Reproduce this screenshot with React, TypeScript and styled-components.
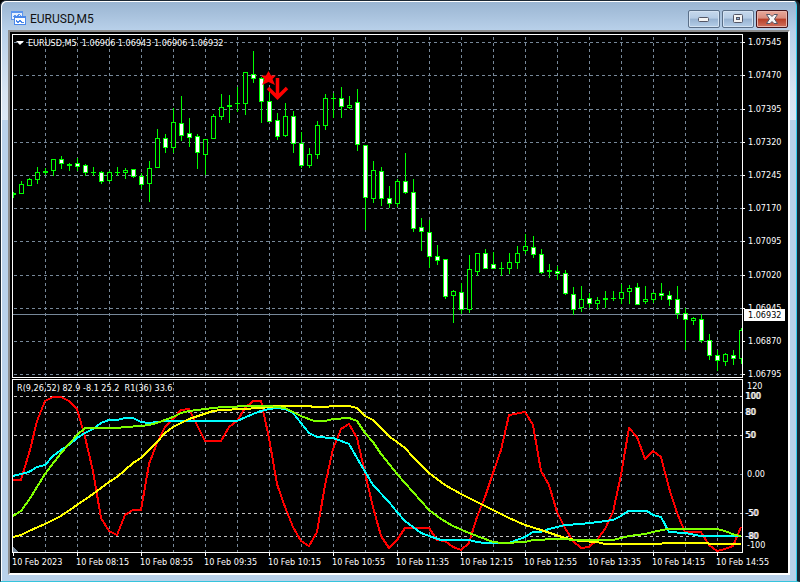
import React from "react";
import styled, { createGlobalStyle, css } from "styled-components";

const GRID = "#778899";
const LEVEL = "#c0c0c0";
const UP = "#00ff00";

const GlobalStyle = createGlobalStyle`
  *, *::before, *::after { box-sizing: border-box; }
  html, body, #root { height: 100%; }
  body { margin: 0; background: #000; font-family: "DejaVu Sans Condensed", "Noto Sans", sans-serif; }
`;

const Window = styled.main`
  display: flex;
  flex-direction: column;
  height: 100vh;
  padding: 0 7px 6px;
  border: 1px solid #1b2733;
  border-width: 1px 3px 1px 1px;
  border-bottom-color: #35c4dc;
  border-radius: 6px 6px 0 0;
  box-shadow: inset 1px 1px #fff, inset -1px 0 #35d0f0;
  background:
    linear-gradient(#99b4d1, #b9d1ea 30px, #d7e4f2 90px, #dce8f5 119px, transparent 119px),
    #b9d1ea;
`;

const TitleBar = styled.header`
  display: flex;
  align-items: center;
  flex: 0 0 29px;
  gap: 4px;
  padding: 6px 2px 0 3px;
`;

const Title = styled.h1`
  flex: 1;
  margin: 0;
  font-family: Roboto, "Noto Sans", sans-serif;
  font-size: 12px;
  font-weight: 400;
  line-height: 16px;
  color: #111;
`;

const Controls = styled.div`
  display: flex;
  gap: 2px;
`;

const ControlButton = styled.button<{ $danger?: boolean }>`
  display: flex;
  align-items: center;
  justify-content: center;
  width: 32px;
  height: 18px;
  padding: 0;
  border: 1px solid ${(p) => (p.$danger ? "#43141b" : "#5a6f88")};
  border-radius: 2px;
  background: ${(p) =>
    p.$danger
      ? "linear-gradient(#e8a99b, #d98b7c 45%, #b83f28 50%, #cf705d)"
      : "linear-gradient(#c6d8ec, #b5cce5 45%, #97b2d1 50%, #b5cee8)"};
  box-shadow: inset 0 0 0 1px ${(p) => (p.$danger ? "#e9b5ab" : "#d3e2f2")};
`;

const Chart = styled.section`
  display: grid;
  flex: 1;
  min-height: 0;
  grid-template-columns: minmax(0, 1fr) 45px;
  grid-template-rows: minmax(0, 344fr) minmax(0, 174fr) 19px;
  row-gap: 1px;
  padding: 2px 0 0 2px;
  border: 2px solid;
  border-color: #8c8c8c #fff #fff #8c8c8c;
  background: #000;
  color: #fff;
  font-size: 9px;
`;

const Panel = styled.div`
  position: relative;
  border: 1px solid #fff;
`;

const Plot = styled.svg`
  display: block;
  width: 100%;
  height: 100%;
`;

const Caption = styled.div<{ $inset: number }>`
  position: absolute;
  top: 1px;
  left: ${(p) => p.$inset}px;
  display: flex;
  align-items: center;
  gap: 4px;
  line-height: 14px;
  white-space: pre;
`;

const Scale = styled.div`
  position: relative;
  display: flex;
  flex-direction: column;
`;

const Step = styled.div<{ $span: number }>`
  display: flex;
  align-items: flex-end;
  flex: ${(p) => p.$span} 0 0;
  min-height: 0;
`;

const ScaleLabel = styled.span<{ $tick?: boolean; $strong?: boolean }>`
  display: flex;
  align-items: center;
  height: 1px;
  padding-left: ${(p) => (p.$tick ? 0 : p.$strong ? 2 : 4)}px;
  line-height: 1px;
  ${(p) => p.$strong && css`text-shadow: 1px 0 #fff;`}
  ${(p) =>
    p.$tick &&
    css`
      gap: 3px;
      &::before {
        content: "";
        width: 2px;
        height: 1px;
        background: #fff;
      }
    `}
`;

const PriceTag = styled.output`
  position: absolute;
  top: 80%;
  left: 1px;
  width: 41px;
  padding-left: 4px;
  background: #fff;
  color: #000;
  line-height: 12px;
`;

const TimeAxis = styled.div`
  display: flex;
  grid-column: 1 / -1;
  margin-top: -1px;
  padding-right: 45px;
`;

const TimeLabel = styled.time<{ $span: number }>`
  flex: ${(p) => p.$span} 0 0;
  min-width: 0;
  white-space: nowrap;
  line-height: 12px;
  &::before {
    content: "";
    display: block;
    width: 1px;
    height: 3px;
    margin-left: 1px;
    background: #fff;
  }
`;

type Candle = [high: number, top: number, bottom: number, low: number, bearish?: 1];

// A trailing 1 marks a bearish (filled) body
const candles: Candle[] = [
  [192, 193, 194, 197], [181, 184, 193, 193], [178, 179, 185, 185], [167, 172, 179, 183],
  [168, 171, 172, 174], [159, 159, 170, 175], [156, 159, 163, 168, 1], [163, 164, 165, 170],
  [158, 163, 166, 170, 1], [164, 165, 172, 175, 1], [167, 172, 172, 175], [171, 172, 181, 183, 1],
  [171, 172, 180, 181], [167, 172, 172, 175], [168, 170, 172, 178], [169, 169, 176, 177, 1],
  [173, 176, 184, 188, 1], [161, 168, 183, 201], [129, 138, 167, 167], [134, 138, 147, 152, 1],
  [108, 122, 147, 152], [96, 123, 135, 140, 1], [118, 133, 137, 146, 1], [134, 136, 152, 168, 1],
  [139, 139, 154, 174], [114, 116, 138, 138], [94, 107, 116, 119], [95, 105, 106, 122],
  [87, 103, 103, 111], [72, 72, 103, 114], [51, 74, 78, 82, 1], [77, 78, 101, 122, 1],
  [90, 101, 121, 121, 1], [113, 120, 136, 139, 1], [103, 116, 135, 136], [111, 116, 143, 152, 1],
  [132, 143, 165, 167, 1], [148, 154, 165, 167], [121, 125, 154, 158], [94, 98, 125, 129],
  [93, 98, 98, 117], [87, 98, 106, 117, 1], [96, 105, 107, 108], [89, 102, 144, 150, 1],
  [145, 145, 197, 229, 1], [161, 170, 198, 202], [167, 171, 198, 205, 1], [186, 198, 203, 207, 1],
  [179, 181, 203, 206], [153, 181, 192, 193, 1], [179, 192, 228, 231, 1], [218, 227, 231, 250, 1],
  [220, 232, 256, 267, 1], [245, 256, 260, 264, 1], [259, 259, 296, 298, 1], [290, 291, 295, 322],
  [283, 292, 309, 313, 1], [255, 269, 309, 312], [253, 253, 271, 275], [249, 253, 268, 268, 1],
  [252, 264, 268, 268, 1], [262, 268, 268, 275], [253, 262, 268, 273], [246, 253, 262, 268],
  [234, 246, 250, 253], [236, 247, 254, 257, 1], [249, 254, 272, 273, 1], [264, 270, 271, 277],
  [266, 271, 273, 279, 1], [270, 273, 293, 294, 1], [287, 294, 309, 314, 1], [286, 299, 307, 311],
  [293, 298, 303, 307, 1], [297, 300, 303, 309], [291, 298, 299, 307], [291, 298, 298, 300],
  [284, 292, 298, 303], [285, 288, 291, 303], [283, 287, 304, 304, 1], [286, 299, 301, 303],
  [292, 293, 299, 302], [283, 293, 295, 299, 1], [291, 295, 299, 305, 1], [286, 299, 313, 318, 1],
  [308, 313, 319, 349, 1], [317, 318, 320, 324], [314, 319, 340, 342, 1], [334, 340, 355, 359, 1],
  [350, 355, 360, 370, 1], [353, 354, 361, 365], [350, 355, 358, 364, 1], [328, 330, 358, 363],
];

const curves = [
  {
    color: "#ff0000",
    points:
      "13,480 21,480 30,450 37,421 45,401 53,397 61,397 69,401 77,409 85,437 93,471 101,518 109,531 117,535 125,515 133,510 141,510 149,464 157,443 165,427 173,419 181,410 189,409 197,425 205,441 221,441 229,427 237,421 245,408 253,401 261,401 269,438 277,484 285,507 293,527 301,541 309,546 317,532 325,485 333,449 341,429 349,424 357,438 365,473 373,507 381,536 389,548 397,540 405,528 429,528 437,540 445,541 453,547 461,550 469,543 477,517 485,497 493,473 501,450 509,415 525,412 533,425 541,471 549,485 557,512 565,528 573,541 581,548 589,547 597,540 605,529 613,512 621,475 629,428 637,437 645,459 653,451 661,457 669,488 677,513 685,532 701,532 709,545 717,551 725,549 733,546 741,527",
  },
  {
    color: "#00ffff",
    points:
      "13,476 29,472 37,467 45,465 53,456 61,450 69,445 77,438 85,433 93,429 101,423 109,420 117,420 125,418 133,418 141,422 149,423 157,422 165,421 237,421 253,414 261,411 269,409 277,408 285,409 293,413 301,423 309,433 317,437 333,438 341,441 349,444 357,458 373,485 389,502 397,512 405,521 413,527 421,533 429,536 441,540 469,540 477,542 485,543 509,543 517,540 525,537 533,532 541,532 549,529 565,525 581,524 598,522 613,520 621,516 628,511 647,511 653,515 661,517 669,532 685,533 701,536 741,536",
  },
  {
    color: "#ffff00",
    points:
      "13,537 21,535 29,531 45,524 61,516 77,505 93,494 109,482 117,477 133,463 141,458 157,442 165,433 173,427 189,419 213,411 222,410 261,408 277,406 309,406 314,407 325,407 333,406 349,406 357,408 365,416 373,420 390,437 397,442 405,448 413,457 429,473 445,485 461,494 485,506 509,518 525,525 541,530 565,538 580,541 597,542 605,544 661,544 663,543 707,543 710,544 741,544",
  },
  {
    color: "#7fff00",
    points:
      "13,516 21,511 29,500 45,474 61,453 77,435 85,428 117,428 125,427 141,426 149,425 157,423 165,420 173,417 181,413 189,411 205,409 222,407 253,406 269,406 285,408 293,412 301,416 314,421 325,421 333,419 349,418 357,421 365,433 373,442 381,454 390,465 397,474 413,492 429,510 441,519 453,526 469,533 485,539 493,542 503,543 525,542 533,540 557,539 580,540 613,540 621,538 629,536 645,534 653,532 667,529 717,529 725,531 735,535 741,536",
  },
];

const columns = Array.from({ length: 22 }, (_, i) => 45 + i * 32);
const priceRows = [42, 75, 109, 142, 175, 208, 241, 275, 308, 341, 374];
const levelRows = [396, 412, 435, 474, 513, 536];

const prices: [string, number][] = [
  ["1.07545", 9], ["1.07470", 33], ["1.07395", 34], ["1.07320", 33], ["1.07245", 33], ["1.07170", 33],
  ["1.07095", 33], ["1.07020", 34], ["1.06945", 33], ["1.06870", 33], ["1.06795", 33],
];

const levels: { text: string; span: number; strong?: boolean }[] = [
  { text: "120", span: 8 },
  { text: "100", span: 10, strong: true },
  { text: "80", span: 16, strong: true },
  { text: "50", span: 23, strong: true },
  { text: "0.00", span: 39 },
  { text: "-50", span: 39, strong: true },
  { text: "-80", span: 23, strong: true },
  { text: "-100", span: 9 },
];

const times = [
  "10 Feb 2023", "10 Feb 08:15", "10 Feb 08:55", "10 Feb 09:35", "10 Feb 10:15", "10 Feb 10:55",
  "10 Feb 11:35", "10 Feb 12:15", "10 Feb 12:55", "10 Feb 13:35", "10 Feb 14:15", "10 Feb 14:55",
];

function ChartIcon() {
  return (
    <svg width="15" height="15" viewBox="0 0 15 15" shapeRendering="crispEdges" aria-hidden="true">
      <rect x="0.5" y="0.5" width="11" height="8" fill="#e8f1fd" stroke="#5b95ee" />
      <path d="M1 1.5h11" stroke="#5b95ee" />
      <path d="M2 6l2-2 2 2 2-3 2 2" fill="none" stroke="#5b95ee" />
      <rect x="3.5" y="5.5" width="11" height="8" fill="#fff" stroke="#4a88ea" />
      <path d="M3 6.5h11" stroke="#4a88ea" />
      <path d="M5 9l2 3 2-3 2 3 2-1" fill="none" stroke="#4a88ea" />
    </svg>
  );
}

function CandleShape({ candle, x }: { candle: Candle; x: number }) {
  const [high, top, bottom, low, bearish] = candle;
  return (
    <g>
      <rect x={x} y={high} width="1" height={low - high + 1} fill={UP} />
      <rect x={x - 2} y={top} width="5" height={bottom - top + 1} fill={UP} />
      {bottom - top > 1 && (
        <rect x={x - 1} y={top + 1} width="3" height={bottom - top - 1} fill={bearish ? "#fff" : "#000"} />
      )}
    </g>
  );
}

function PricePlot() {
  return (
    <Plot viewBox="13 35 729 342" preserveAspectRatio="none" shapeRendering="crispEdges" role="img" aria-label="Price candles">
      <g stroke={GRID} strokeDasharray="3 3">
        {columns.map((x) => <path key={x} d={`M${x + 0.5} 37V377`} />)}
        {priceRows.map((y) => <path key={y} d={`M14 ${y + 0.5}H742`} />)}
      </g>
      <path d="M13 314.5H742" stroke={GRID} />
      {candles.map((candle, i) => <CandleShape key={i} candle={candle} x={13 + i * 8} />)}
      <g shapeRendering="geometricPrecision">
        <path d="M268.5 71l2.500 4.500h5L272.500 79l2.500 6-6.500-3-6.500 3 2.500-6-3.500-3.500h5z" fill="#f00" />
        <path d="M277.5 78v19M268 88l9.500 9.500L287 88" fill="none" stroke="#f00" strokeWidth="3.5" />
      </g>
    </Plot>
  );
}

function IndicatorPlot() {
  return (
    <Plot viewBox="13 380 729 172" preserveAspectRatio="none" shapeRendering="crispEdges" role="img" aria-label="Oscillator curves">
      <g strokeDasharray="3 3">
        {columns.map((x) => <path key={x} stroke={GRID} d={`M${x + 0.5} 382V552`} />)}
        {levelRows.map((y) => <path key={y} stroke={y === 474 ? GRID : LEVEL} d={`M14 ${y + 0.5}H742`} />)}
      </g>
      <path d="M13 547v5h5z" fill={GRID} />
      {curves.map((c) => (
        <polyline key={c.color} points={c.points} fill="none" stroke={c.color} strokeWidth="2" strokeLinejoin="round" />
      ))}
    </Plot>
  );
}

export default function App() {
  return (
    <>
      <GlobalStyle />
      <Window>
        <TitleBar>
          <ChartIcon />
          <Title>EURUSD,M5</Title>
          <Controls>
            <ControlButton type="button" aria-label="Minimize">
              <svg width="12" height="6" viewBox="0 0 12 6" aria-hidden="true">
                <rect x="0.5" y="1.5" width="10" height="4" rx="1" fill="#f4f4f4" stroke="#535666" />
              </svg>
            </ControlButton>
            <ControlButton type="button" aria-label="Maximize">
              <svg width="12" height="10" viewBox="0 0 12 10" aria-hidden="true">
                <rect x="1.5" y="0.5" width="9" height="8" rx="1" fill="#f4f4f4" stroke="#535666" />
                <rect x="4.5" y="3.5" width="3" height="2" fill="#8fb0d6" stroke="#535666" />
              </svg>
            </ControlButton>
            <ControlButton type="button" aria-label="Close" $danger>
              <svg width="12" height="10" viewBox="0 0 12 10" aria-hidden="true">
                <path d="M.5.5h3.500L6 2.500 8 .5h3.500L8.500 5l3 4.500H8L6 7.500l-2 2H.5l3-4.500z" fill="#f6f6f6" stroke="#535666" />
              </svg>
            </ControlButton>
          </Controls>
        </TitleBar>
        <Chart>
          <Panel>
            <PricePlot />
            <Caption $inset={3}>
              <svg width="8" height="4" viewBox="0 0 8 4" aria-hidden="true">
                <path d="M0 0h8L4 4z" fill="#fff" />
              </svg>
              {"EURUSD,M5  1.06906 1.06943 1.06906 1.06932"}
            </Caption>
          </Panel>
          <Scale>
            {prices.map(([text, span]) => (
              <Step key={text} $span={span}>
                <ScaleLabel $tick>{text}</ScaleLabel>
              </Step>
            ))}
            <Step $span={3} />
            <PriceTag>1.06932</PriceTag>
          </Scale>
          <Panel>
            <IndicatorPlot />
            <Caption $inset={4}>{"R(9,26,52) 82.9 -8.1 25.2  R1(36) 33.6"}</Caption>
          </Panel>
          <Scale>
            {levels.map((l) => (
              <Step key={l.text} $span={l.span}>
                <ScaleLabel $strong={l.strong}>{l.text}</ScaleLabel>
              </Step>
            ))}
            <Step $span={7} />
          </Scale>
          <TimeAxis>
            {times.map((t, i) => (
              <TimeLabel key={t} $span={i === times.length - 1 ? 27 : 64}>{t}</TimeLabel>
            ))}
          </TimeAxis>
        </Chart>
      </Window>
    </>
  );
}
